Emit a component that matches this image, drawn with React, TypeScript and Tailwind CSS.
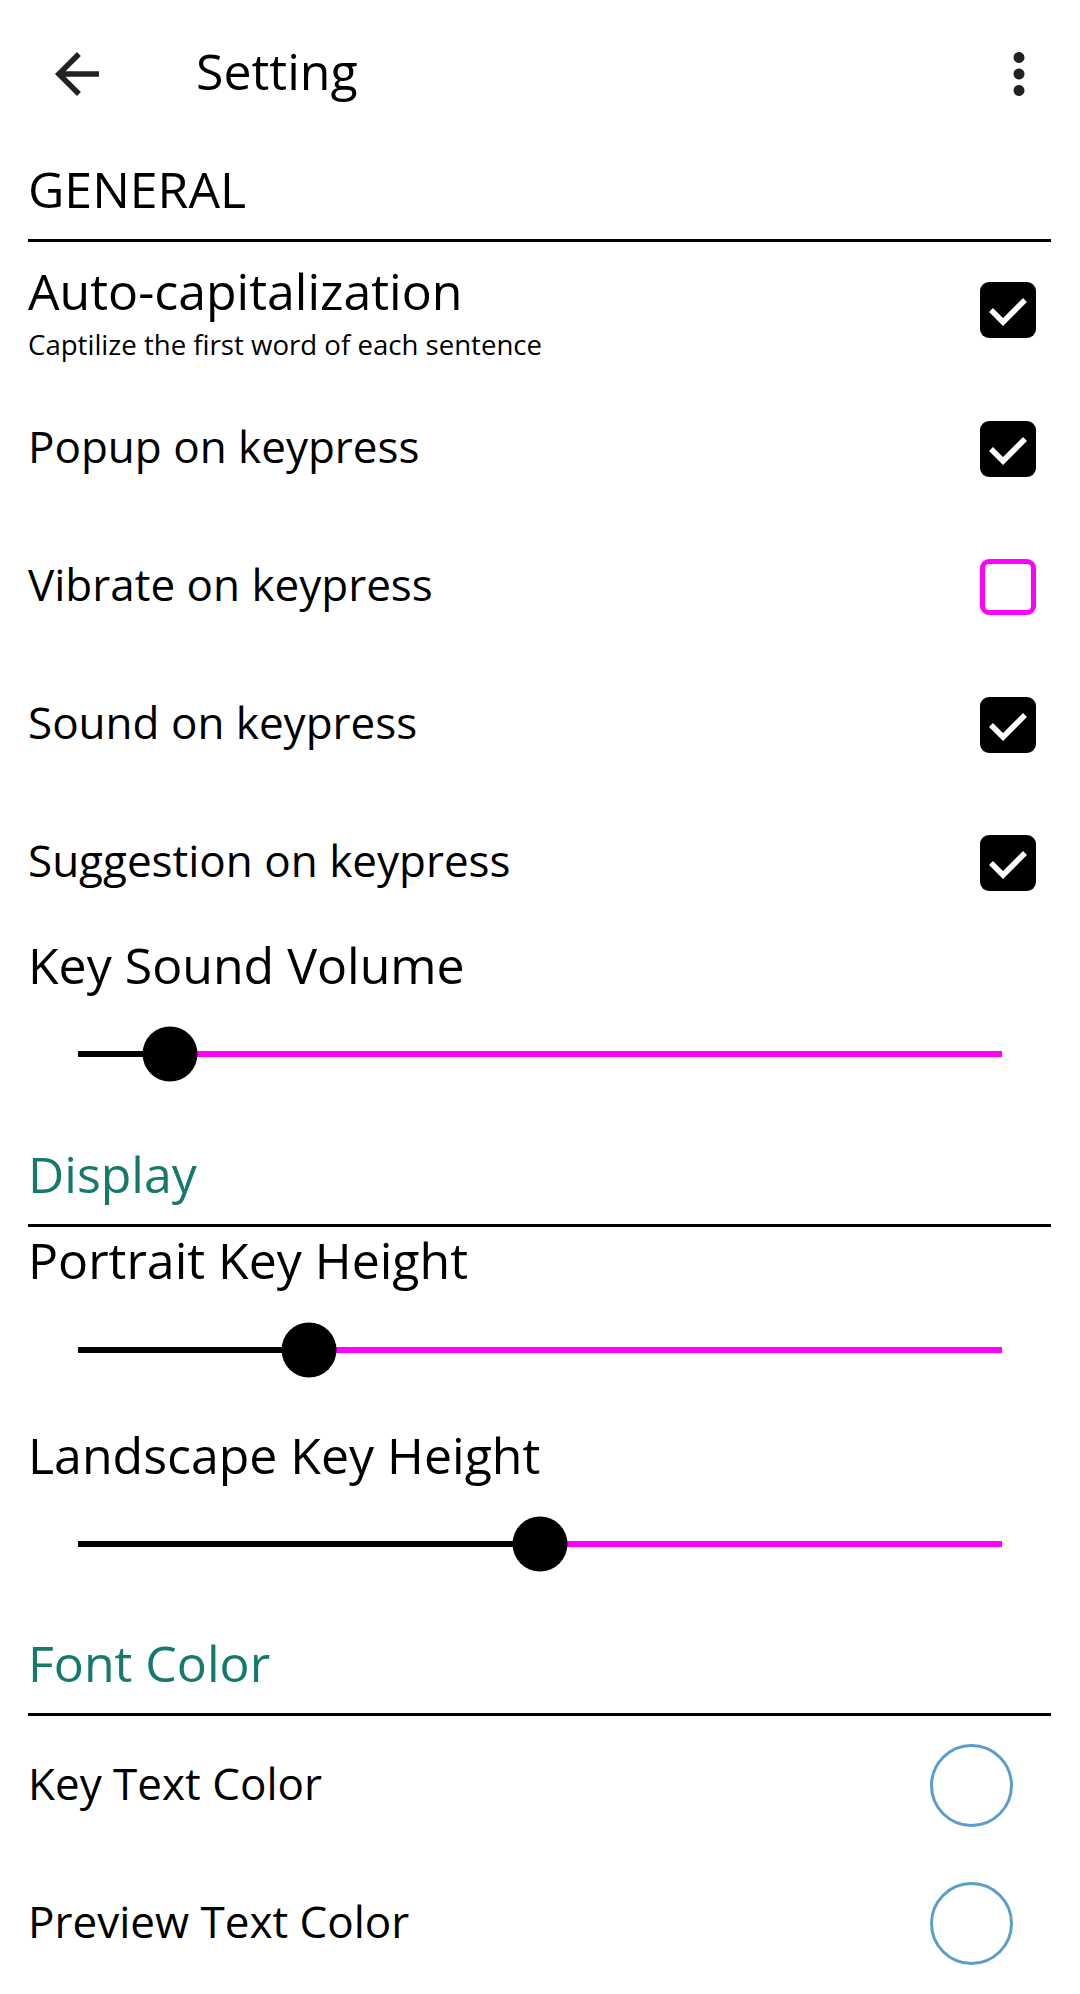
import React from "react";

const MAGENTA = "#f0f";

function BackIcon() {
  return (
    <svg width="66" height="66" viewBox="0 0 24 24" fill="#222">
      <path d="M20 11H7.83l5.59-5.59L12 4l-8 8 8 8 1.41-1.41L7.83 13H20v-2z" />
    </svg>
  );
}

function MoreIcon() {
  return (
    <svg width="66" height="66" viewBox="0 0 24 24" fill="#222">
      <path d="M12 8c1.1 0 2-.9 2-2s-.9-2-2-2-2 .9-2 2 .9 2 2 2zm0 2c-1.1 0-2 .9-2 2s.9 2 2 2 2-.9 2-2-.9-2-2-2zm0 6c-1.1 0-2 .9-2 2s.9 2 2 2 2-.9 2-2-.9-2-2-2z" />
    </svg>
  );
}

function Checkbox({ checked }: { checked: boolean }) {
  if (!checked) {
    return <div className="h-[56px] w-[56px] shrink-0 rounded-[9px] border-[5px] border-[#f0f] bg-white" />;
  }
  return (
    <div className="flex h-[56px] w-[56px] shrink-0 items-center justify-center rounded-[9px] bg-black">
      <svg width="56" height="56" viewBox="0 0 56 56">
        <polyline points="11,28 23,40 45,18" fill="none" stroke="#fff" strokeWidth="5.5" />
      </svg>
    </div>
  );
}

function SectionHeader({ title, teal, pt }: { title: string; teal?: boolean; pt: string }) {
  return (
    <div className={`${pt} border-b-[3px] border-black pb-[19px]`}>
      <div className={`text-[50px] leading-[62px] ${teal ? "text-[#16796b]" : "text-black"}`}>{title}</div>
    </div>
  );
}

function ToggleRow({ label, checked }: { label: string; checked: boolean }) {
  return (
    <div className="flex h-[138px] items-center justify-between pr-[15px]">
      <span className="pb-[6px] text-[44px] leading-[60px]">{label}</span>
      <Checkbox checked={checked} />
    </div>
  );
}

function Slider({ value }: { value: number }) {
  return (
    <div className="flex h-[100px] items-center pl-[50px] pr-[49px]">
      <div className="relative flex h-[6px] w-full">
        <div className="h-full bg-black" style={{ width: `${value}%` }} />
        <div className="h-full flex-1" style={{ background: MAGENTA }} />
        <div
          className="absolute top-1/2 h-[55px] w-[55px] -translate-x-1/2 -translate-y-1/2 rounded-full bg-black"
          style={{ left: `${value}%` }}
        />
      </div>
    </div>
  );
}

function ColorRow({ label }: { label: string }) {
  return (
    <div className="flex h-[138px] items-center justify-between pr-[38px]">
      <span className="pb-[5px] text-[44px] leading-[60px]">{label}</span>
      <div className="h-[83px] w-[83px] rounded-full border-[3px] border-[#5a9ec9]" />
    </div>
  );
}

function Label({ text, className = "" }: { text: string; className?: string }) {
  return (
    <div className={`flex h-[72px] items-center ${className}`}>
      <span className="pb-[6px] text-[50px] leading-[62px]">{text}</span>
    </div>
  );
}

export default function App() {
  return (
    <div className="min-h-[1994px] w-[1080px] bg-white text-black" style={{ fontFamily: '"Open Sans", "Noto Sans", sans-serif' }}>
      {/* Toolbar */}
      <div className="flex h-[147px] items-center justify-between pl-[44px] pr-[28px]">
        <div className="flex items-center">
          <BackIcon />
          <span className="ml-[86px] pb-[5px] text-[50px] leading-[62px]">Setting</span>
        </div>
        <MoreIcon />
      </div>

      <div className="pl-[28px] pr-[29px]">
        <SectionHeader title="GENERAL" pt="pt-[11px]" />

        <div className="flex items-start justify-between pb-[14px] pr-[15px] pt-[18px]">
          <div className="flex flex-col">
            <span className="text-[50px] leading-[62px]">Auto-capitalization</span>
            <span className="text-[27.6px] leading-[44px]">Captilize the first word of each sentence</span>
          </div>
          <div className="mt-[22px]">
            <Checkbox checked />
          </div>
        </div>

        <ToggleRow label="Popup on keypress" checked />
        <ToggleRow label="Vibrate on keypress" checked={false} />
        <ToggleRow label="Sound on keypress" checked />
        <ToggleRow label="Suggestion on keypress" checked />

        <Label text="Key Sound Volume" />
        <Slider value={10} />

        <SectionHeader title="Display" teal pt="pt-[39px]" />
        <Label text="Portrait Key Height" />
        <div className="flex h-[102px] flex-col justify-center">
          <Slider value={25} />
        </div>
        <Label text="Landscape Key Height" className="mt-[21px]" />
        <Slider value={50} />

        <SectionHeader title="Font Color" teal pt="pt-[38px]" />
        <ColorRow label="Key Text Color" />
        <ColorRow label="Preview Text Color" />
      </div>
    </div>
  );
}
